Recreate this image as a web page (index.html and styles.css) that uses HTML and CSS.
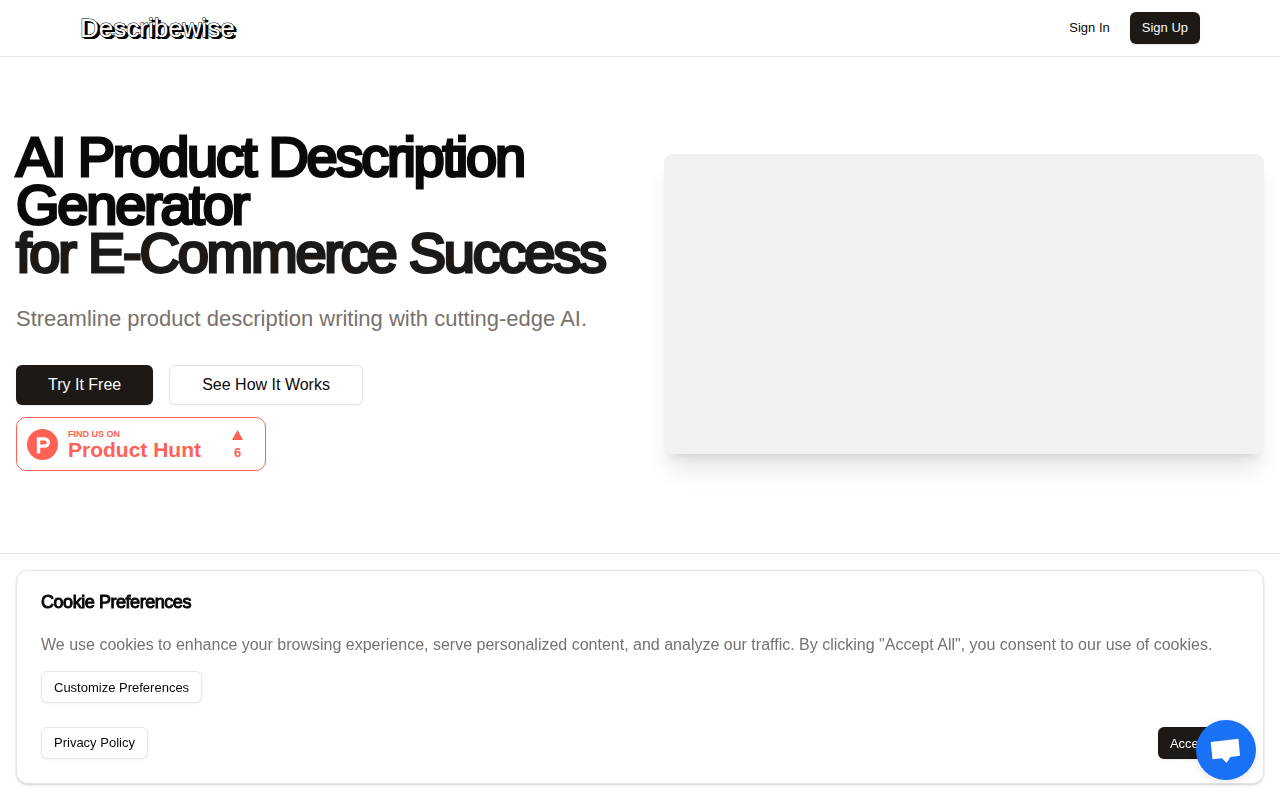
FILE: index.html
```html
<!DOCTYPE html>
<html lang="en">
<head>
<meta charset="utf-8">
<meta name="viewport" content="width=device-width, initial-scale=1">
<title>Describewise</title>
<link rel="stylesheet" href="styles.css">
</head>
<body>
<header class="site-header">
  <a class="logo" href="#">Describewise</a>
  <nav class="account-nav">
    <a class="btn btn-small btn-ghost" href="#">Sign In</a>
    <a class="btn btn-small btn-primary" href="#">Sign Up</a>
  </nav>
</header>
<main>
  <section class="hero">
    <div class="hero-copy">
      <h1 class="hero-title">AI Product Description Generator <span class="hero-accent">for E-Commerce Success</span></h1>
      <p class="hero-lead">Streamline product description writing with cutting-edge AI.</p>
      <div class="hero-actions">
        <a class="btn btn-large btn-primary" href="#">Try It Free</a>
        <a class="btn btn-large btn-outline" href="#">See How It Works</a>
      </div>
      <a class="ph-badge" href="#">
        <svg class="ph-logo" viewBox="0 0 31 31" aria-hidden="true">
          <circle cx="15.5" cy="15.5" r="15.5" fill="#ff6154"/>
          <path fill="#fff" fill-rule="evenodd" d="M9.800 8.200h7.900a5.300 5.300 0 0 1 0 10.600H13.200V24.200h-3.400zM13.200 11.400v4.200h4.400a2.100 2.100 0 0 0 0-4.200z"/>
        </svg>
        <span class="ph-text">
          <span class="ph-caption">FIND US ON</span>
          <span class="ph-name">Product Hunt</span>
        </span>
        <span class="ph-votes">
          <svg class="ph-arrow" viewBox="0 0 11 10" aria-hidden="true"><path fill="#ff6154" d="M5.500 0 11 10H0z"/></svg>
          <span>6</span>
        </span>
      </a>
    </div>
    <div class="hero-media"></div>
  </section>
</main>
<section class="cookie-card" aria-labelledby="cookie-title">
  <h2 class="cookie-title" id="cookie-title">Cookie Preferences</h2>
  <p class="cookie-text">We use cookies to enhance your browsing experience, serve personalized content, and analyze our traffic. By clicking "Accept All", you consent to our use of cookies.</p>
  <button class="btn btn-small btn-outline" type="button">Customize Preferences</button>
  <div class="cookie-footer">
    <a class="btn btn-small btn-outline" href="#">Privacy Policy</a>
    <button class="btn btn-small btn-primary" type="button">Accept All</button>
  </div>
</section>
<button class="chat-button" type="button" aria-label="Open chat">
  <svg class="chat-icon" viewBox="0 0 60 60" aria-hidden="true"><path fill="#fff" d="M14.700 22 42.500 18.800 44 35.700 34.500 37 30.500 43 26 38.200 16.500 39.200z"/></svg>
</button>
</body>
</html>
```
FILE: styles.css
```css
* {
  box-sizing: border-box;
}

body {
  margin: 0;
  background: #fff;
  color: #0c0a09;
  font: 16px/24px "Liberation Sans", Arial, sans-serif;
}

h1, h2, p {
  margin: 0;
}

a {
  color: inherit;
  text-decoration: none;
}

.site-header {
  display: flex;
  align-items: center;
  justify-content: space-between;
  padding: 12px 80px;
  border-bottom: 1px solid #e5e5e5;
}

.logo {
  color: #fff;
  font-size: 26px;
  line-height: 32px;
  paint-order: stroke fill;
  -webkit-text-stroke: 1px #000;
  text-shadow: 1px 1px 0 #000, 2px 2px 0 #000, 3px 2px 0 #000;
}

.account-nav {
  display: flex;
  gap: 8px;
}

.btn {
  display: inline-flex;
  align-items: center;
  justify-content: center;
  border: 1px solid transparent;
  border-radius: 6px;
  background: transparent;
  color: #0c0a09;
  font-family: inherit;
  white-space: nowrap;
  cursor: pointer;
}

.btn-small {
  height: 32px;
  padding: 0 12px;
  font-size: 13px;
}

.btn-large {
  height: 40px;
  padding: 0 32px;
  font-size: 16px;
}

.btn-ghost {
  border: 0;
}

.btn-primary {
  border: 0;
  background: #1c1917;
  color: #fafaf9;
  box-shadow: 0 1px 2px rgba(0, 0, 0, 0.1);
}

.btn-outline {
  border-color: #e5e5e5;
  background: #fff;
  box-shadow: 0 1px 2px rgba(0, 0, 0, 0.05);
}

.hero {
  display: grid;
  grid-template-columns: 1fr 1fr;
  gap: 48px;
  align-items: center;
  padding: 76px 16px 78px;
  border-bottom: 1px solid #e5e5e5;
}

.hero-copy {
  padding-bottom: 4px;
}

.hero-title {
  font-size: 56px;
  font-weight: 400;
  line-height: 48px;
  letter-spacing: -0.04em;
  -webkit-text-stroke: 3px currentColor;
}

.hero-accent {
  display: block;
  color: #1c1917;
}

.hero-lead {
  margin: 26px 0 30px;
  color: #78716c;
  font-size: 22px;
  line-height: 32px;
}

.hero-actions {
  display: flex;
  flex-wrap: wrap;
  gap: 16px;
  margin-bottom: 12px;
}

.ph-badge {
  display: flex;
  align-items: center;
  width: 250px;
  height: 54px;
  padding: 0 22px 0 10px;
  border: 1px solid #ff6154;
  border-radius: 10px;
  color: #ff6154;
  font-weight: 700;
}

.ph-logo {
  width: 31px;
  height: 31px;
  margin-right: 10px;
}

.ph-text {
  display: grid;
  padding-top: 2px;
}

.ph-caption {
  font-size: 9px;
  line-height: 10px;
}

.ph-name {
  font-size: 21px;
  line-height: 22px;
}

.ph-votes {
  display: grid;
  justify-items: center;
  gap: 5px;
  margin-left: auto;
  padding-top: 3px;
  font-size: 13px;
  line-height: 16px;
}

.ph-arrow {
  width: 11px;
  height: 10px;
}

.hero-media {
  height: 300px;
  border-radius: 8px;
  background: #f1f1f1;
  box-shadow: 0 20px 25px -5px rgba(0, 0, 0, 0.1), 0 8px 10px -6px rgba(0, 0, 0, 0.1);
}

.cookie-card {
  position: fixed;
  right: 16px;
  bottom: 16px;
  left: 16px;
  padding: 23px 24px 24px;
  border: 1px solid #e5e5e5;
  border-radius: 12px;
  background: #fff;
  box-shadow: 0 1px 3px rgba(0, 0, 0, 0.1), 0 1px 2px rgba(0, 0, 0, 0.1);
}

.cookie-title {
  margin-bottom: 23px;
  font-size: 18px;
  font-weight: 400;
  line-height: 16px;
  letter-spacing: -0.025em;
  -webkit-text-stroke: 1px currentColor;
}

.cookie-text {
  margin-bottom: 14px;
  color: #78716c;
}

.cookie-footer {
  display: flex;
  justify-content: space-between;
  margin-top: 24px;
}

.chat-button {
  position: fixed;
  right: 24px;
  bottom: 20px;
  width: 60px;
  height: 60px;
  padding: 0;
  border: 0;
  border-radius: 50%;
  background: #1972f5;
  box-shadow: 0 2px 8px rgba(0, 0, 0, 0.1);
  cursor: pointer;
}

.chat-icon {
  display: block;
}
```
